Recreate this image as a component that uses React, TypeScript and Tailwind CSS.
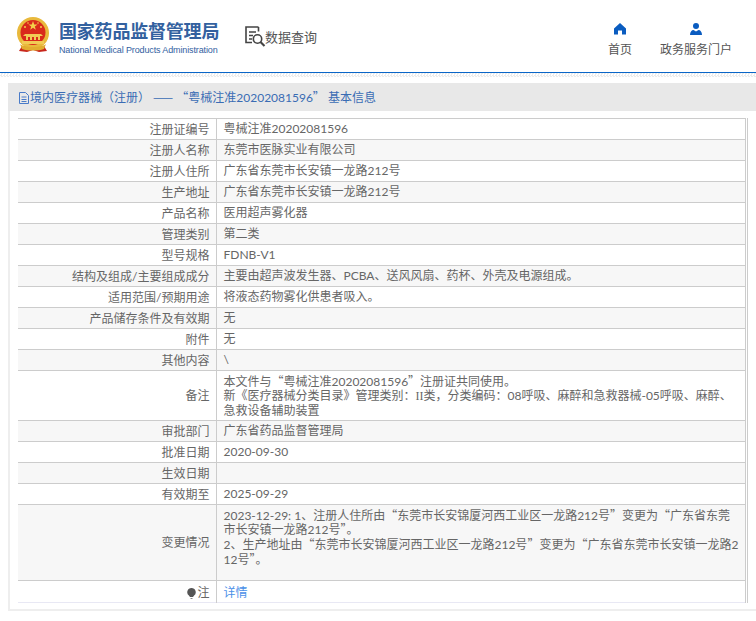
import type { ReactNode } from 'react'

const FONT = '[font-family:"Lato","Noto_Sans_CJK_SC",sans-serif]'
const CJK = "leading-[0] [font-family:'Noto_Sans_CJK_SC',sans-serif]"

type Row = { label: ReactNode; value: ReactNode; h?: string }

// curly quotes need the CJK face, the latin one draws them narrow
function LQ() {
  return <span className={CJK}>“</span>
}
function RQ() {
  return <span className={CJK}>”</span>
}

const rows: Row[] = [
  { label: '注册证编号', value: '粤械注准20202081596' },
  { label: '注册人名称', value: '东莞市医脉实业有限公司' },
  { label: '注册人住所', value: '广东省东莞市长安镇一龙路212号' },
  { label: '生产地址', value: '广东省东莞市长安镇一龙路212号' },
  { label: '产品名称', value: '医用超声雾化器' },
  { label: '管理类别', value: '第二类' },
  { label: '型号规格', value: 'FDNB-V1' },
  { label: '结构及组成/主要组成成分', value: '主要由超声波发生器、PCBA、送风风扇、药杯、外壳及电源组成。' },
  { label: '适用范围/预期用途', value: '将液态药物雾化供患者吸入。' },
  { label: '产品储存条件及有效期', value: '无' },
  { label: '附件', value: '无' },
  { label: '其他内容', value: '\\' },
  {
    label: '备注',
    h: 'h-[50px]',
    value: (
      <div className="pt-[1px]">
        本文件与<LQ />粤械注准20202081596<RQ />注册证共同使用。
        <br />
        新《医疗器械分类目录》管理类别：
        <span className="leading-[0] [font-family:'Liberation_Serif',serif]">II</span>
        类，分类编码：08呼吸、麻醉和急救器械-05呼吸、麻醉、急救设备辅助装置
      </div>
    ),
  },
  { label: '审批部门', value: '广东省药品监督管理局' },
  { label: '批准日期', value: '2020-09-30' },
  { label: '生效日期', value: '' },
  { label: '有效期至', value: '2025-09-29' },
  {
    label: '变更情况',
    h: 'h-[76px]',
    value: (
      <div className="pb-[12px] pt-[2px] leading-[14.700px]">
        2023-12-29: 1、注册人住所由<LQ />东莞市长安锦厦河西工业区一龙路212号<RQ />变更为<LQ />广东省东莞市长安镇一龙路212号<RQ />。
        <br />
        2、生产地址由<LQ />东莞市长安锦厦河西工业区一龙路212号<RQ />变更为<LQ />广东省东莞市长安镇一龙路212号<RQ />。
      </div>
    ),
  },
]

function Emblem() {
  return (
    <svg width="34" height="36" viewBox="0 0 34 36">
      <path d="M6 29l-3 5 8 1 6-2 6 2 8-1-3-5z" fill="#c8261c" />
      <circle cx="17" cy="16" r="16" fill="#e9b93c" />
      <circle cx="17" cy="15.5" r="12.5" fill="#d92a1c" />
      <path d="M17 4l1.200 3.400h3.400l-2.800 2 1 3.300-2.800-2-2.800 2 1-3.300-2.800-2h3.400z" fill="#f4cf4a" />
      <circle cx="9" cy="10" r="1" fill="#f4cf4a" />
      <circle cx="25" cy="10" r="1" fill="#f4cf4a" />
      <circle cx="12" cy="6" r="0.8" fill="#f4cf4a" />
      <circle cx="22" cy="6" r="0.8" fill="#f4cf4a" />
      <path d="M9 17h16l2 2H7zM10 19h14v4H10zM6 24h22v3H6z" fill="#f1cb55" />
      <path d="M12 20h2v3h-2zM16 20h2v3h-2zM20 20h2v3h-2z" fill="#d92a1c" />
      <path d="M4 27c4 4 22 4 26 0l-2 5c-6 2-16 2-22 0z" fill="#e2ad30" />
    </svg>
  )
}

function SearchDocIcon() {
  return (
    <svg width="21" height="22" viewBox="0 0 21 22" fill="none" stroke="#444" strokeWidth="1.6">
      <path d="M13.500 1H1v15.500h6" />
      <path d="M13.500 1v4.500M4 6h7M4 9.500h4M4 13h3" />
      <circle cx="12.500" cy="13" r="4.200" />
      <path d="M15.500 16l4 4" strokeWidth="2.200" />
    </svg>
  )
}

function DocIcon() {
  return (
    <svg width="10" height="12" viewBox="0 0 10 12" fill="none" stroke="#4a7bc8" strokeWidth="1">
      <path d="M.5.5h6l3 3v8h-9zM2.500 5h5M2.500 7.500h5M2.500 9.500h5" />
    </svg>
  )
}

function BulbIcon() {
  return (
    <svg width="9" height="11" viewBox="0 0 9 11" className="mr-[1px]">
      <path d="M4.500 0a4.200 4.200 0 0 1 2.600 7.500L6 9H3L1.900 7.500A4.200 4.200 0 0 1 4.500 0z" fill="#555" />
      <path d="M3.500 10h2v1h-2z" fill="#888" />
    </svg>
  )
}

function Header() {
  return (
    <header className="flex h-[72px] items-start bg-white">
      <div className="ml-[16px] mt-[17px]">
        <Emblem />
      </div>
      <div className="ml-[9px] mt-[21px] w-[160px]">
        <div className="text-[18px] font-bold leading-[20px] tracking-[-0.2px] whitespace-nowrap text-[#33619f]">
          国家药品监督管理局
        </div>
        <div className="mt-[4px] whitespace-nowrap [font-family:'Liberation_Sans',sans-serif] text-[9px] leading-[11px] tracking-[-0.125px] text-[#33619f]">
          National Medical Products Administration
        </div>
      </div>
      <div className="ml-[26px] mt-[26px] flex items-center">
        <SearchDocIcon />
        <span className="ml-[-1px] text-[13px] leading-[20px] text-[#555]">数据查询</span>
      </div>
      <nav className="ml-auto flex pr-[24px] pt-[23px] text-[12px] text-[#555]">
        <div className="flex w-[24px] flex-col items-center">
          <svg width="12" height="12" viewBox="0 0 12 12" fill="#0a5cc0">
            <path d="M6 0L12 5.500V11.500H8V7.500H4V11.500H0V5.500z" />
          </svg>
          <span className="mt-[6px] whitespace-nowrap leading-[18px]">首页</span>
        </div>
        <div className="ml-[28px] flex w-[72px] flex-col items-center">
          <svg width="12" height="12" viewBox="0 0 12 12" fill="#0a5cc0">
            <circle cx="6" cy="3" r="3" />
            <path d="M0 12c0-3 1.500-5 3.500-5L6 8.500 8.500 7c2 0 3.500 2 3.500 5z" />
          </svg>
          <span className="mt-[6px] whitespace-nowrap leading-[18px]">政务服务门户</span>
        </div>
      </nav>
    </header>
  )
}

export default function App() {
  return (
    <div className={`h-[621px] w-[756px] overflow-hidden bg-white ${FONT} text-[12px] text-[#666]`}>
      <Header />
      <div className="h-[1px] bg-[#0a66c8]" />
      <div className="h-[4px] bg-[repeating-conic-gradient(#ececec_0_25%,#fff_0_50%)] bg-[length:3px_3px]" />
      <main className="ml-[8px] mt-[6px] h-[528px] border-b-2 border-l-2 border-[#eeeeee]">
        <div className="ml-[-2px] flex h-[28px] items-center bg-[#e8e8e8] pl-[11px] pt-[1px] leading-[16px] text-[#3a6cb4]">
          <DocIcon />
          <span className="ml-[1px] whitespace-pre">
            境内医疗器械（注册） <span className={CJK}>——</span> <LQ />粤械注准20202081596<RQ /> 基本信息
          </span>
        </div>
        <div className="ml-[8px] mt-[7px] w-[730px] border-r-[3px] border-double border-[#cccccc]">
          <table className="w-[727px] table-fixed border-collapse border-t border-[#cccccc]">
            <colgroup>
              <col className="w-[198px]" />
              <col />
            </colgroup>
            <tbody>
              {rows.map((r, i) => (
                <tr key={i} className={`${i % 2 === 1 ? 'bg-[#f7f7f7]' : 'bg-white'} ${r.h ?? 'h-[21px]'} border-b border-[#cccccc]`}>
                  <td className="border-r border-[#cccccc] pr-[6px] pt-[1px] text-right leading-[14px]">{r.label}</td>
                  <td className="pl-[7px] pr-[5px] pt-[1px] leading-[14.500px] break-all">{r.value}</td>
                </tr>
              ))}
              <tr className="h-[22px] border-b border-[#e8e8f4] bg-white">
                <td className="border-r border-[#cccccc] pr-[6px] pt-[3px] leading-[14px]">
                  <div className="flex items-center justify-end">
                    <BulbIcon />
                    <span>注</span>
                  </div>
                </td>
                <td className="pl-[7px] pt-[3px] text-[#4b90e8]">详情</td>
              </tr>
            </tbody>
          </table>
        </div>
      </main>
    </div>
  )
}
